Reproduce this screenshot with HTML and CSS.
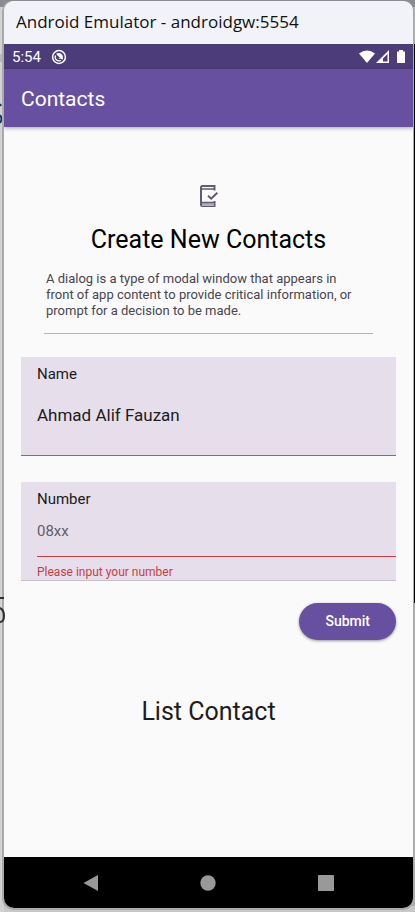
FILE: index.html
```html
<!DOCTYPE html>
<html lang="en">
<head>
<meta charset="utf-8">
<meta name="viewport" content="width=device-width, initial-scale=1">
<title>Contacts</title>
<link rel="stylesheet" href="styles.css">
</head>
<body>
<svg class="backdrop" width="5" height="912" viewBox="0 0 5 912" aria-hidden="true">
  <path d="M0 0H5V7H0z" fill="#8c8b93"/>
  <path d="M0 54H4V62H0z" fill="#b9b9bb"/>
  <path d="M0 104l1 2M0 115q3 4 0 8" stroke="#17365c" stroke-width="2" fill="none"/>
</svg>
<div class="window">
  <header class="titlebar">Android Emulator - androidgw:5554</header>
  <div class="screen">
    <div class="statusbar">
      <span>5:54</span>
      <svg width="16" height="16" viewBox="0 0 16 16" aria-hidden="true">
        <circle cx="8" cy="8" r="6.400" fill="none" stroke="#fff" stroke-width="1.500"/>
        <path d="M4.500 6.500Q3.500 9 5.500 11Q7.500 12.500 10 11.500" fill="none" stroke="#fff" stroke-width="1.300"/>
        <path d="M5 4.800Q8 3 10.500 5Q12.800 7.500 11.500 10.800L9.500 9.500Q8.500 10 7.500 9L9 8.800L6.500 6.500z" fill="#fff"/>
      </svg>
      <svg class="signals" width="48" height="14" viewBox="0 0 48 14" aria-hidden="true">
        <path d="M0 3.500Q8 -2.500 16 3.500L8 13z" fill="#fff"/>
        <path d="M30 0V13H17z" fill="#fff"/>
        <path d="M28.500 4V11.500H24V8.500z" fill="#4d3c7a"/>
        <path d="M38 1.500H40V0H44V1.500H46V13H38z" fill="#fff"/>
      </svg>
    </div>
    <div class="appbar">Contacts</div>
    <main class="content">
      <section class="intro">
        <svg class="intro-icon" width="24" height="24" viewBox="0 0 24 24" aria-hidden="true">
          <path d="M17.500 6.500V2H5.500Q4 2 4 3.500V20.500Q4 22 5.500 22H17.500V17" fill="none" stroke="#625b71" stroke-width="2"/>
          <path d="M4 5H17.500" stroke="#625b71" stroke-width="1.600"/>
          <path d="M5 19H17V22H5z" fill="#b2abc0"/>
          <path d="M4 18.500H17.500" fill="none" stroke="#625b71" stroke-width="1.600"/>
          <path d="M11 11.700L14.200 14.700L20.300 8.700" fill="none" stroke="#625b71" stroke-width="2"/>
        </svg>
        <h1>Create New Contacts</h1>
        <p>A dialog is a type of modal window that appears in front of app content to provide critical information, or prompt for a decision to be made.</p>
      </section>
      <form class="form" novalidate>
        <div class="field">
          <label for="name">Name</label>
          <input id="name" class="filled" type="text" value="Ahmad Alif Fauzan">
        </div>
        <div class="field invalid">
          <label for="number">Number</label>
          <input id="number" type="tel" placeholder="08xx" aria-describedby="number-error" aria-invalid="true">
          <span class="error" id="number-error">Please input your number</span>
        </div>
        <button class="submit" type="button">Submit</button>
      </form>
      <h2>List Contact</h2>
    </main>
    <nav class="navbar">
      <button type="button" aria-label="Back"><svg width="18" height="18" viewBox="0 0 18 18"><path d="M1.500 9L16 1V17z" fill="#999"/></svg></button>
      <button type="button" aria-label="Home"><svg width="18" height="18" viewBox="0 0 18 18"><circle cx="9" cy="9" r="7.700" fill="#999"/></svg></button>
      <button type="button" aria-label="Overview"><svg width="18" height="18" viewBox="0 0 18 18"><rect x="1" y="1" width="16" height="16" rx="1" fill="#999"/></svg></button>
    </nav>
  </div>
</div>
<svg class="backdrop" width="5" height="912" viewBox="0 0 5 912" aria-hidden="true">
  <path d="M0 598H4M0 608q4 2 4 8t-4 6" stroke="#303030" stroke-width="2" fill="none"/>
</svg>
</body>
</html>
```
FILE: styles.css
```css
* { box-sizing: border-box; }

body {
  margin: 0;
  min-height: 100vh;
  display: flex;
  padding: 1px 2px 4px 4px;
  font-family: Roboto, "Liberation Sans", sans-serif;
  color: #1d1b20;
  background: linear-gradient(#8c8b93 0 7px, transparent 7px),
    linear-gradient(90deg, #d2d2d2 4px, transparent 4px),
    linear-gradient(#adadad 44px, #000 44px 603px, #adadad 603px 906px, #c8c8c8 906px);
}

.backdrop {
  position: absolute;
  left: 0;
  top: 0;
}

.window {
  position: relative;
  flex: 1;
  display: flex;
  flex-direction: column;
  border-radius: 10px;
  overflow: hidden;
  box-shadow: 0 0 0 2px #aaa;
  clip-path: inset(0 -1px -2px -2px round 10px);
  background: #fafafa;
}

.titlebar {
  height: 43px;
  padding-left: 12px;
  background: #f1f3f8;
  color: #111;
  font: 17px/42px "Open Sans", "Noto Sans", sans-serif;
}

.screen {
  flex: 1;
  display: flex;
  flex-direction: column;
}

.statusbar {
  height: 25px;
  display: flex;
  align-items: center;
  gap: 10px;
  padding: 0 6px 0 8px;
  background: #4d3c7a;
  color: #fff;
  font-size: 15px;
}

.signals { margin-left: auto; }

.appbar {
  position: relative;
  height: 58px;
  padding-left: 17px;
  background: #6750a0;
  color: #fff;
  font-size: 21px;
  line-height: 60px;
  box-shadow: 0 1px 4px rgba(0, 0, 0, .35);
}

.content {
  flex: 1;
  padding: 57px 17px 0;
  background: #fafafa;
}

.intro {
  margin: 0 23px;
  padding-bottom: 14px;
  border-bottom: 1px solid #b5b3b7;
}

.intro-icon {
  display: block;
  margin: 0 auto;
}

h1, h2 {
  margin: 0;
  font-weight: 400;
  text-align: center;
}

h1 {
  margin-top: 16px;
  color: #000;
  font-size: 25px;
  line-height: 32px;
}

.intro p {
  margin: 15px 16px 0 2px;
  color: #49454f;
  font-size: 13px;
  line-height: 16px;
}

.form {
  display: flex;
  flex-direction: column;
  margin-top: 23px;
}

.field {
  height: 99px;
  display: flex;
  flex-direction: column;
  margin-bottom: 26px;
  padding: 8px 0 0 16px;
  background: #e6dfeb;
  border-bottom: 1px solid #77737b;
}

.field label {
  font-size: 15px;
  line-height: 18px;
}

.field input {
  width: 100%;
  margin: 0;
  padding: 0;
  border: 0;
  outline: 0;
  background: transparent;
  color: inherit;
  font: 15px/18px Roboto, sans-serif;
}

.field .filled {
  height: 64px;
  font-size: 17px;
}

.field input::placeholder {
  color: #625d68;
  opacity: 1;
}

.invalid {
  margin-bottom: 22px;
  border-bottom-color: #c8c2cc;
}

.invalid input {
  height: 50px;
  padding-bottom: 2px;
  border-bottom: 1px solid #c93d42;
}

.error {
  margin-top: 7px;
  color: #c93d42;
  font-size: 12px;
  line-height: 16px;
}

.submit {
  align-self: flex-end;
  height: 37px;
  padding: 0 26px;
  border: 0;
  border-radius: 19px;
  background: #6750a0;
  color: #fff;
  font: 500 14px/37px Roboto, sans-serif;
  box-shadow: 0 1px 3px rgba(0, 0, 0, .4);
}

h2 {
  margin-top: 56px;
  font-size: 25px;
  line-height: 32px;
}

.navbar {
  height: 51px;
  display: flex;
  align-items: center;
  justify-content: space-around;
  padding: 0 28px;
  background: #000;
}

.navbar button {
  flex: 0 0 18px;
  height: 18px;
  padding: 0;
  border: 0;
  background: none;
}

.navbar svg { display: block; }
```
